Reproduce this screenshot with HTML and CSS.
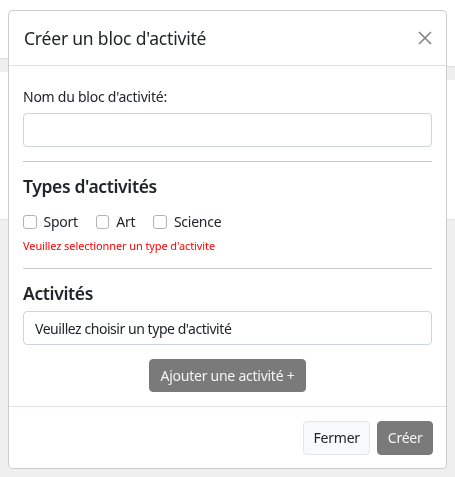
FILE: index.html
```html
<!DOCTYPE html>
<html lang="fr">
<head>
<meta charset="utf-8">
<title>Créer un bloc d'activité</title>
<link rel="stylesheet" href="styles.css">
</head>
<body>
<div class="page">
  <div class="page-top">
    <div class="tab-line"></div>
  </div>
  <div class="strips">
    <div class="strip strip-left"></div>
    <div class="strip strip-right"></div>
  </div>
  <div class="page-lower"></div>
</div>

<div class="modal" role="dialog">
  <div class="modal-header">
    <h5 class="modal-title">Créer un bloc d'activité</h5>
    <button class="btn-close" type="button" aria-label="Fermer">
      <svg width="14" height="14" viewBox="0 0 14 14"><path d="M1 1L13 13M13 1L1 13" stroke="#808080" stroke-width="1.5" fill="none"/></svg>
    </button>
  </div>
  <div class="modal-body">
    <label class="field-label" for="nom">Nom du bloc d'activité:</label>
    <input class="form-control" id="nom" type="text">
    <hr class="sep">
    <h5 class="section-title">Types d'activités</h5>
    <div class="checks">
      <label class="check"><input type="checkbox" class="check-input"><span>Sport</span></label>
      <label class="check"><input type="checkbox" class="check-input"><span>Art</span></label>
      <label class="check"><input type="checkbox" class="check-input"><span>Science</span></label>
    </div>
    <div class="error">Veuillez selectionner un type d'activite</div>
    <hr class="sep">
    <h5 class="section-title">Activités</h5>
    <div class="form-control select-like">Veuillez choisir un type d'activité</div>
    <div class="add-row">
      <button class="btn btn-gray" type="button">Ajouter une activité +</button>
    </div>
  </div>
  <div class="modal-footer">
    <button class="btn btn-light" type="button">Fermer</button>
    <button class="btn btn-gray" type="button">Créer</button>
  </div>
</div>
</body>
</html>
```

FILE: styles.css
```css
* { box-sizing: border-box; }
html, body { margin: 0; padding: 0; }
body {
  width: 455px;
  height: 477px;
  overflow: hidden;
  background: #ffffff;
  font-family: "Noto Sans", "Open Sans", sans-serif;
  color: #212529;
}
.page { height: 477px; display: flex; flex-direction: column; }
.page-top { height: 58px; padding-top: 10px; }
.tab-line { margin-left: 148px; width: 160px; height: 1px; background: #5c6268; }
.strips { display: flex; align-items: flex-start; height: 161px; }
.strip { width: 50%; height: 14px; background: #efefef; border-top: 1px solid #dcdcdc; }
.strip-right { margin-top: 8px; }
.page-lower { flex: 1; background: #efefef; border-top: 1px solid #e0e0e0; }

.modal {
  position: fixed;
  top: 10px;
  left: 8px;
  width: 439px;
  background: #fff;
  border: 1px solid rgba(0, 0, 0, 0.2);
  border-radius: 5px;
  display: flex;
  flex-direction: column;
}
.modal-header {
  height: 55px;
  padding: 0 14px 0 15px;
  display: flex;
  align-items: center;
  justify-content: space-between;
  border-bottom: 1px solid #dee2e6;
}
.modal-title {
  margin: 0;
  font-size: 17.5px;
  font-weight: 400;
  letter-spacing: -0.2px;
  line-height: 27px;
}
.btn-close {
  border: 0;
  background: transparent;
  padding: 0;
  width: 14px;
  height: 14px;
  display: block;
}
.btn-close svg { display: block; }

.modal-body {
  padding: 20px 14px 14px;
  display: flex;
  flex-direction: column;
}
.field-label {
  display: block;
  font-size: 14px;
  letter-spacing: -0.25px;
  line-height: 21.6px;
  margin-bottom: 5.5px;
}
.form-control {
  display: block;
  width: 100%;
  height: 34px;
  border: 1px solid #ced4da;
  border-radius: 4px;
  background: #fff;
  font-family: inherit;
  font-size: 14px;
  letter-spacing: -0.25px;
  color: #212529;
  padding: 0 11px;
}
.select-like { display: flex; align-items: center; letter-spacing: -0.45px; }
.sep {
  margin: 14px 0;
  border: 0;
  border-top: 1px solid #c8c9ca;
  height: 0;
}
.section-title {
  margin: 0;
  font-size: 17.5px;
  font-weight: 600;
  letter-spacing: -0.35px;
  line-height: 21.6px;
}
.checks {
  display: flex;
  gap: 18px;
  margin-top: 13.5px;
  font-size: 14px;
  letter-spacing: -0.25px;
  line-height: 21.6px;
}
.check { display: inline-flex; align-items: center; gap: 7px; }
.check-input {
  appearance: none;
  -webkit-appearance: none;
  margin: 0;
  width: 13.5px;
  height: 13.5px;
  border: 1px solid #b3b3b3;
  border-radius: 3px;
  background: #fff;
}
.error {
  margin-top: 4px;
  font-size: 11px;
  line-height: 17.3px;
  color: #ff0000;
  letter-spacing: -0.1px;
}
.error + .sep { margin-top: 14px; }
.section-title + .form-control { margin-top: 6.5px; }
.add-row { display: flex; justify-content: center; margin-top: 14px; }
.btn {
  height: 33px;
  border-radius: 4px;
  font-family: inherit;
  font-size: 14px;
  letter-spacing: -0.25px;
  padding: 0 11px;
  border: 1px solid transparent;
  line-height: 1;
}
.btn-gray { background: #7a7a7a; color: #f4f4f4; border-color: #7a7a7a; }
.btn-light { background: #f8f9fa; color: #212529; border-color: #e4e6e8; }
.modal-footer {
  border-top: 1px solid #dee2e6;
  padding: 14px 13px 13px;
  display: flex;
  justify-content: flex-end;
  gap: 7px;
}
.modal-footer .btn { height: 34px; padding: 0 9.5px; }
```
